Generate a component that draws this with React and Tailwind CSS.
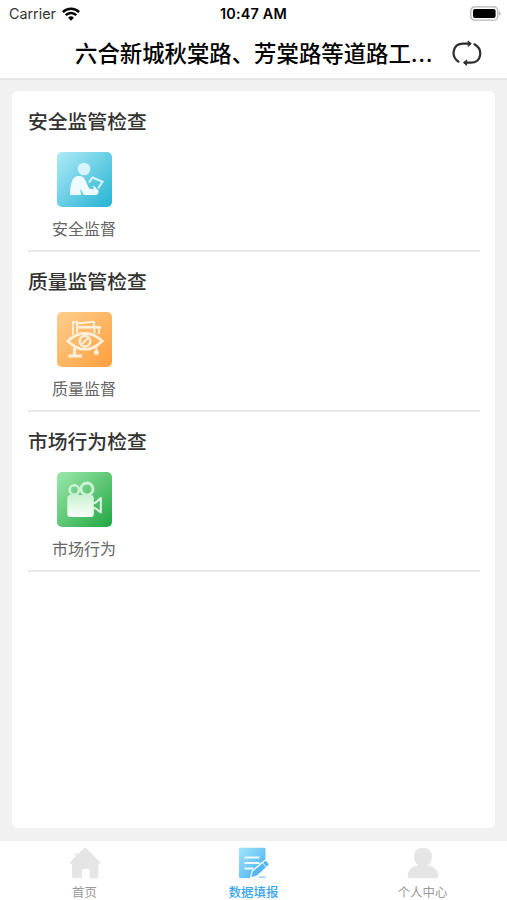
import React from 'react';

const SafetyIcon = () => (
  <svg className="h-[55px] w-[55px]" viewBox="0 0 55 55" fill="none">
    <defs>
      <linearGradient id="safetyBg" x1="0" y1="0" x2="1" y2="1">
        <stop offset="0" stopColor="#aeeaf6" />
        <stop offset="1" stopColor="#25b3d3" />
      </linearGradient>
    </defs>
    <rect width="55" height="55" rx="5" fill="url(#safetyBg)" />
    <circle cx="27" cy="17" r="6.300" fill="#d8f5fb" />
    <path d="M13 43c0-6 .8-11.500 2.500-15 1.200-2.700 3.300-4 6.300-4 3.500 0 5.300 1.500 6.500 4.300l3.900 8.200 4.800.7-1.200-3.700c1.600.4 2.700 1.600 3.700 3.300l2 1.200c.3 3-.6 5-2.700 5H28.500c-1.800 0-2.500-.6-3.200-2.300l-1.600-4.200-.3 3.500 1.200 3z" fill="#effbfe" />
    <path d="M32 30.500l3.500-5 10 4.300-4.300 6.400" stroke="#d8f5fb" strokeWidth="2" />
  </svg>
);

const QualityIcon = () => (
  <svg className="h-[55px] w-[55px]" viewBox="0 0 55 55" fill="none">
    <defs>
      <linearGradient id="qualityBg" x1="0" y1="0" x2="1" y2="1">
        <stop offset="0" stopColor="#fdce8d" />
        <stop offset="1" stopColor="#ff9f3d" />
      </linearGradient>
    </defs>
    <rect width="55" height="55" rx="5" fill="url(#qualityBg)" />
    <g stroke="#fff0dc" strokeWidth="1.800">
      <path d="M16 23V10h4v11M20 11.500l14-1.500h3v4M37.500 16v5.500M42 16v6" />
      <path d="M20 15.300h24" strokeWidth="2.600" />
      <path d="M17.500 35.500v8" strokeWidth="3.200" />
      <path d="M11.500 44h13.500" strokeWidth="3" />
      <path d="M10.800 29Q19 21.300 28 21.300T45.200 29Q37 37.300 28 37.300T10.800 29z" strokeWidth="2.700" />
      <circle cx="28" cy="29.200" r="5.300" strokeWidth="2.300" />
      <path d="M25 32l6-6" strokeWidth="1.800" />
      <path d="M39.300 35v5" />
    </g>
    <circle cx="39.300" cy="40.500" r="2.500" fill="#fff0dc" />
  </svg>
);

const MarketIcon = () => (
  <svg className="h-[55px] w-[55px]" viewBox="0 0 55 55" fill="none">
    <defs>
      <linearGradient id="marketBg" x1="0" y1="0" x2="1" y2="1">
        <stop offset="0" stopColor="#9ce8ab" />
        <stop offset="1" stopColor="#22a741" />
      </linearGradient>
      <linearGradient id="marketBody" x1="0" y1="0" x2="0" y2="1">
        <stop offset="0" stopColor="#caf1d1" />
        <stop offset="1" stopColor="#fbfffb" />
      </linearGradient>
    </defs>
    <rect width="55" height="55" rx="5" fill="url(#marketBg)" />
    <circle cx="17.300" cy="18" r="4.700" stroke="#cdf2d4" strokeWidth="2.600" />
    <circle cx="30" cy="17" r="6" stroke="#cdf2d4" strokeWidth="2.800" />
    <rect x="10.300" y="23" width="26.500" height="22" rx="3" fill="url(#marketBody)" />
    <path d="M36.500 31.300l2.300-.8 5-4.500v14.500l-5-4-2.300-.7" stroke="#dcf6e1" strokeWidth="2.100" strokeLinejoin="round" />
  </svg>
);

const HomeIcon = () => (
  <svg className="h-8 w-8" viewBox="0 0 32 32" fill="#e5e5e5">
    <path d="M5.500 5.800h4v5h-4z" fill="#f0f0f0" />
    <path d="M16.800.8l14.500 14.400c.6.8.2 1.500-.6 1.500h-1.400v12.600c0 1.400-.7 2-2 2h-6.600v-7.200c0-1.500-1-2.300-2.300-2.300h-3c-1.300 0-2.300.8-2.300 2.300v7.200H5c-1.300 0-2-.6-2-2V16.700H1.500c-.8 0-1.200-.7-.6-1.500L15.500.8c.5-.4.9-.4 1.300 0z" />
  </svg>
);

const ReportIcon = () => (
  <svg className="h-8 w-8" viewBox="0 0 32 32" fill="none">
    <defs>
      <linearGradient id="reportBg" x1="0" y1="0" x2="1" y2="1">
        <stop offset="0" stopColor="#a3e5fb" />
        <stop offset="1" stopColor="#3fabf0" />
      </linearGradient>
    </defs>
    <path d="M2.500.8h23.500c1 0 1.500.5 1.500 1.500v11L15 23.500 11.800 31H2.500C1.500 31 1 30.500 1 29.500V2.300C1 1.300 1.500.8 2.500.8z" fill="url(#reportBg)" />
    <path d="M6.500 10.500h15M6.500 16h15M6.500 21.500h9" stroke="#f0fbff" strokeWidth="1.800" />
    <path d="M12.800 31l1.400-6.800L26.500 13.700c.8-.6 1.400-.6 2 0l2.400 2.700c.6.700.6 1.300-.1 2L19 29.200z" fill="#54b5f2" stroke="#fff" strokeWidth="1.200" />
    <path d="M24.500 15.800l4 4.500" stroke="#fff" strokeWidth="1" />
    <path d="M20.500 30.200h7" stroke="#9dd7f8" strokeWidth="1.600" />
  </svg>
);

const UserIcon = () => (
  <svg className="h-8 w-8" viewBox="0 0 32 32" fill="#e5e5e5">
    <path d="M16 .8c5.200 0 9 3.800 9 8.700 0 3.600-1.500 6.800-4.300 8.800 6.100 1.100 10.600 5 10.600 10.700 0 1.600-.8 2.300-2.200 2.300H2.900C1.500 31.300.7 30.600.7 29c0-5.700 4.500-9.600 10.600-10.700C8.500 16.300 7 13.100 7 9.500 7 4.600 10.800.8 16 .8z" />
  </svg>
);

const sections = [
  { title: '安全监管检查', label: '安全监督', icon: SafetyIcon },
  { title: '质量监管检查', label: '质量监督', icon: QualityIcon },
  { title: '市场行为检查', label: '市场行为', icon: MarketIcon }
];

const tabs = [
  { label: '首页', icon: HomeIcon, active: false },
  { label: '数据填报', icon: ReportIcon, active: true },
  { label: '个人中心', icon: UserIcon, active: false }
];

const App = () => {
  return (
    <div className="flex h-[900px] w-[507px] flex-col overflow-hidden bg-[#f1f1f1] font-['Inter','Noto_Sans_CJK_SC',sans-serif]">
      {/* Status bar */}
      <div className="grid h-[27px] shrink-0 grid-cols-3 items-center bg-white text-black">
        <div className="flex items-center gap-1.5 pl-[9px]">
          <span className="text-[14.3px] text-[#333]">Carrier</span>
          <svg className="h-[14px] w-[18px]" viewBox="0 0 18 14" fill="none" stroke="#000" strokeWidth="2.500">
            <path d="M.9 5.200a11.500 11.500 0 0116.200 0M3.700 8.200a7.500 7.500 0 0110.600 0" />
            <path d="M9 13.700l-2.900-3a4.100 4.100 0 015.800 0z" fill="#000" stroke="none" />
          </svg>
        </div>
        <div className="text-center text-[14.400px] font-semibold tracking-[0.2px]">10:47 AM</div>
        <div className="flex justify-end pr-[6px]">
          <svg className="h-[15px] w-[31px]" viewBox="0 0 31 15">
            <rect x=".8" y=".8" width="27" height="13.400" rx="4" fill="#fff" stroke="#b5b5b5" strokeWidth="1.300" />
            <rect x="3" y="3" width="22.600" height="9" rx="2" fill="#000" />
            <path d="M29 5.300c2.200.7 2.200 3.700 0 4.400z" fill="#b5b5b5" />
          </svg>
        </div>
      </div>

      {/* Header */}
      <div className="flex h-[53px] shrink-0 items-center border-b-2 border-[#e6e6e6] bg-white pt-px pr-[25px] pl-[75px]">
        <h1 className="w-[362px] truncate pt-px text-[22.4px] leading-[32px] font-medium text-black">
          六合新城秋棠路、芳棠路等道路工<span className="tracking-[0.7px]">...</span>
        </h1>
        <button className="ml-auto">
          <svg className="h-[28px] w-[30px]" viewBox="0 0 30 28" fill="none" stroke="#2e2e2e" strokeWidth="2.200" strokeLinecap="round">
            <path d="M6.500 22.700C-1.500 17.500.5 4.700 11 4.700h6M22.500 5.300c9 5.200 7 18.400-3.500 18.400h-5" />
            <path d="M16.500 2.300l2.800 2.400-2.800 2.400zM14.300 21.300l-2.800 2.400 2.800 2.400z" fill="#2e2e2e" strokeWidth="1" strokeLinejoin="round" />
          </svg>
        </button>
      </div>

      {/* Content card */}
      <div className="mx-3 mt-[11px] mb-[13px] flex-1 rounded-md bg-white pr-[15px] pl-4">
        {sections.map(({ title, label, icon: Icon }, i) => (
          <div key={title} className={i === 0 ? 'h-[161px] border-b-2 border-[#e9e9e9] pt-4' : 'h-40 border-b-2 border-[#e9e9e9] pt-[15px]'}>
            <h2 className="text-[19.8px] leading-[30px] font-medium text-[#333]">{title}</h2>
            <div className="mt-[15px] flex w-28 flex-col items-center">
              <Icon />
              <span className="mt-[10px] text-[16px] leading-6 text-[#666]">{label}</span>
            </div>
          </div>
        ))}
      </div>

      {/* Tab bar */}
      <div className="grid h-[59px] shrink-0 grid-cols-3 bg-white">
        {tabs.map(({ label, icon: Icon, active }) => (
          <button key={label} className="flex flex-col items-center pt-[6px]">
            <Icon />
            <span className={active ? 'mt-[6px] text-[12.4px] leading-4 font-medium text-[#38a5f0]' : 'mt-[6px] text-[12.4px] leading-4 text-[#999]'}>{label}</span>
          </button>
        ))}
      </div>
    </div>
  );
};

export default App;
